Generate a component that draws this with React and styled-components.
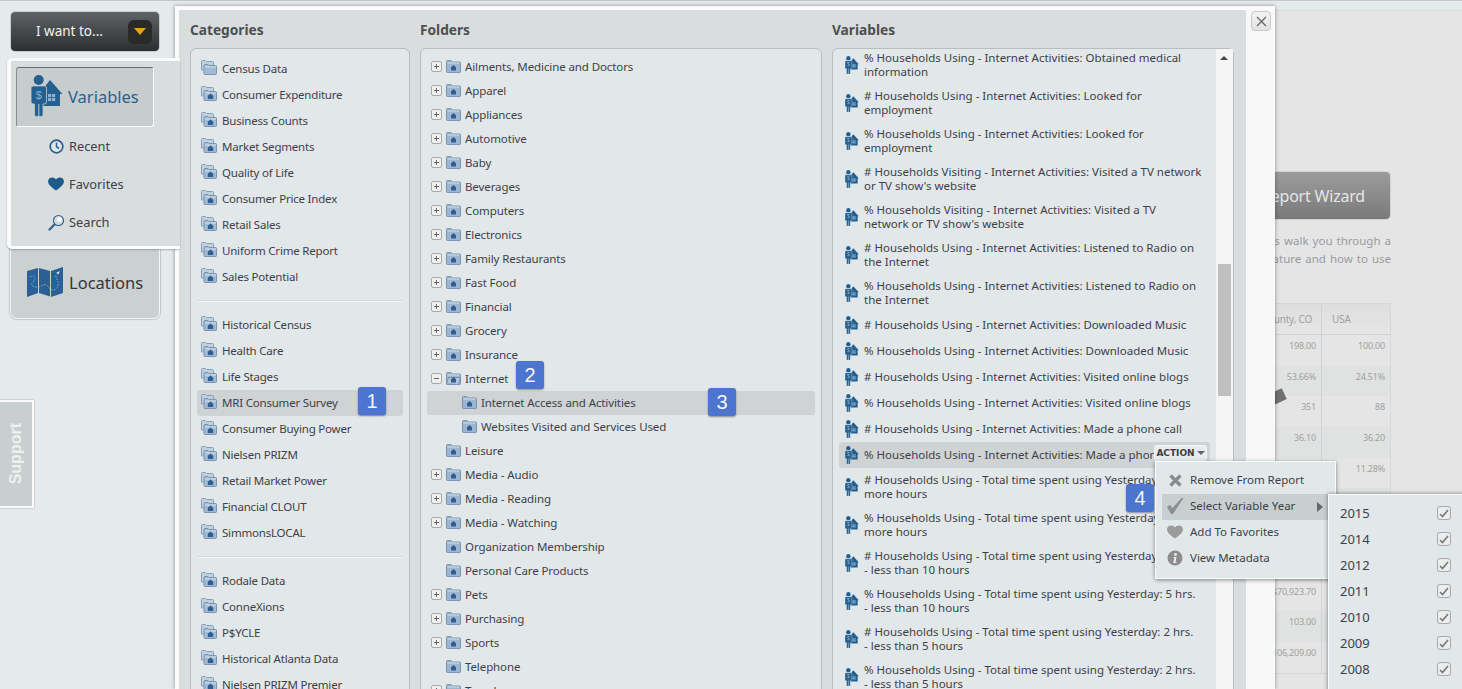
import React from "react";
import styled, { createGlobalStyle } from "styled-components";

const FONT = `"Noto Sans", "DejaVu Sans", sans-serif`;

const Global = createGlobalStyle`
  html, body { margin: 0; padding: 0; height: 689px; overflow: hidden; background: #e5eaed; }
  * { box-sizing: border-box; }
  #root { height: 689px; overflow: hidden; }
`;

const Page = styled.div`
  display: flex;
  height: 689px;
  overflow: hidden;
  border-top: 1px solid #c4c7c7;
  font-family: ${FONT};
  font-size: 11.5px;
  color: #3d4147;
`;

/* ---------- sidebar ---------- */
const Sidebar = styled.aside`
  width: 175px;
  flex: none;
  display: flex;
  flex-direction: column;
  padding-top: 10px;
  position: relative;
  z-index: 3;
`;
const WantButton = styled.div`
  width: 150px;
  height: 41px;
  margin: 0 0 6px 10px;
  display: flex;
  align-items: center;
  justify-content: space-between;
  padding: 0 7px 0 25px;
  border: 1px solid #c9cccc;
  border-radius: 5px;
  background: linear-gradient(#5e6365, #2c2f30);
  color: #f2f2f2;
  font-size: 13.5px;
`;
const WantLabel = styled.span`
  margin-top: -2px;
`;
const Caret = styled.span`
  width: 24px;
  height: 24px;
  border-radius: 6px;
  background: #2a2b29;
  display: flex;
  align-items: center;
  justify-content: center;
  &::after {
    content: "";
    border-left: 6.5px solid transparent;
    border-right: 6.5px solid transparent;
    border-top: 7px solid #e6a21a;
  }
`;
const NavPanel = styled.div`
  width: 173px;
  height: 191px;
  margin-left: 7px;
  padding: 6px 0 0 5px;
  background: #d9dddd;
  border: 4px solid #fbfbfb;
  border-width: 3px 0 3px 4px;
  border-radius: 5px 0 0 5px;
  box-shadow: 0 1px 2px rgba(0,0,0,.25);
  position: relative;
  z-index: 2;
`;
const VariablesTab = styled.div`
  width: 138px;
  height: 60px;
  display: flex;
  align-items: center;
  gap: 5px;
  padding: 0 0 2px 14px;
  background: #c7cccc;
  border: 1px solid #fff;
  border-top-color: #6b6e6e;
  border-left-color: #8a8d8d;
  border-radius: 3px;
  color: #2b6192;
  font-size: 16.5px;
`;
const SubNav = styled.div`
  display: flex;
  align-items: center;
  height: 38px;
  padding-left: 32px;
  gap: 5px;
  font-size: 12.8px;
  color: #3d4147;
`;
const SubIcon = styled.span`
  width: 16px;
  height: 16px;
  flex: none;
  display: flex;
  align-items: center;
  justify-content: center;
`;
const LocationsTab = styled.div`
  width: 150px;
  height: 70px;
  margin-left: 10px;
  display: flex;
  align-items: center;
  gap: 5px;
  padding: 0 0 2px 16px;
  background: #cbd0d0;
  border: 1px solid #f4f5f5;
  border-top: 0;
  border-radius: 0 0 7px 7px;
  box-shadow: 0 0 1px 1px #c2c6c6;
  color: #33373a;
  font-size: 16.5px;
`;
const SupportTab = styled.div`
  width: 34px;
  height: 108px;
  margin-top: 81px;
  display: flex;
  align-items: center;
  justify-content: center;
  background: #c9cfcf;
  border: 2px solid #fbfbfb;
  border-left: 0;
  box-shadow: 1px 0 0 #cfd3d3, 0 1px 0 #cfd3d3, 0 -1px 0 #cfd3d3;
  color: #eef0f0;
  font: bold 16px "Liberation Sans", sans-serif;
  & > span { writing-mode: vertical-rl; transform: rotate(180deg); }
`;

/* ---------- modal ---------- */
const Modal = styled.main`
  width: 1100px;
  flex: none;
  margin-top: 5px;
  padding-right: 29px;
  background: #f8f8f8;
  border: 4px solid #fbfbfb;
  border-width: 4px 0 0 4px;
  box-shadow: 0 0 4px rgba(0,0,0,.4);
  position: relative;
  z-index: 2;
`;
const CloseButton = styled.div`
  position: absolute;
  top: 1px;
  right: 4px;
  width: 20px;
  height: 20px;
  border: 1px solid #c9c9c9;
  border-radius: 4px;
  background: linear-gradient(#f3f3f3, #e2e2e2);
  display: flex;
  align-items: center;
  justify-content: center;
`;
const Columns = styled.div`
  display: grid;
  grid-template-columns: 220px 402px 402px;
  gap: 10px;
  padding-left: 11px;
  background: #d9dddd;
  min-height: 700px;
`;
const Column = styled.section`
  display: flex;
  flex-direction: column;
`;
const Title = styled.h2`
  margin: 0;
  height: 38px;
  line-height: 40px;
  font-size: 13.7px;
  font-weight: 700;
  color: #4b4f52;
`;
const List = styled.div`
  flex: 1;
  position: relative;
  background: #e2e7ea;
  border: 1px solid #b9bdbd;
  border-radius: 6px 6px 0 0;
  padding: ${(p) => p.$pad};
  letter-spacing: ${(p) => p.$track || 0}px;
`;
const CatRow = styled.div`
  position: relative;
  height: 26px;
  display: flex;
  align-items: center;
  gap: 4px;
  margin: 0 6px;
  padding: 0 0 2px 4px;
  border-radius: 3px;
  background: ${(p) => (p.$active ? "#cfd3d3" : "transparent")};
`;
const Divider = styled.div`
  height: 2px;
  margin: 10px 6px;
  background: #f3f5f5;
  border-top: 1px solid #d6d9d9;
`;
const FolderRow = styled.div`
  position: relative;
  height: 24px;
  display: flex;
  align-items: center;
  margin: 0 6px;
  padding: 0 0 2px ${(p) => (p.$child ? 35 : 19)}px;
  gap: 4px;
  border-radius: 3px;
  background: ${(p) => (p.$active ? "#cfd3d3" : "transparent")};
`;
const Expander = styled.span`
  position: absolute;
  left: 4px;
  top: 6px;
  width: 11px;
  height: 11px;
  border: 1px solid #a9a9a9;
  border-radius: 2px;
  background: #eef0f0;
  &::before {
    content: "";
    position: absolute;
    left: 2px;
    right: 2px;
    top: 4px;
    height: 1px;
    background: #666;
  }
  &::after {
    content: "";
    display: ${(p) => (p.$open ? "none" : "block")};
    position: absolute;
    top: 2px;
    bottom: 2px;
    left: 4px;
    width: 1px;
    background: #666;
  }
`;
const VarRows = styled.div`
  margin-top: -3px;
`;
const VarRow = styled.div`
  position: relative;
  width: 371px;
  height: ${(p) => (p.$lines === 2 ? 38 : 26)}px;
  margin-left: 6px;
  display: flex;
  align-items: center;
  gap: 5px;
  padding-left: 6px;
  border-radius: 3px;
  line-height: 14px;
  white-space: pre;
  background: ${(p) => (p.$active ? "#cfd3d3" : "transparent")};
`;
const ScrollTrack = styled.div`
  position: absolute;
  top: 0;
  right: 0;
  bottom: 0;
  width: 17px;
  background: #f5f5f5;
  &::before {
    content: "";
    position: absolute;
    left: 4px;
    top: 7px;
    border-left: 4px solid transparent;
    border-right: 4px solid transparent;
    border-bottom: 4px solid #444;
  }
`;
const ScrollThumb = styled.div`
  position: absolute;
  left: 2px;
  width: 13px;
  top: 215px;
  height: 132px;
  background: #bfbfbf;
`;
const Badge = styled.div`
  position: absolute;
  left: ${(p) => p.$x}px;
  top: ${(p) => p.$y}px;
  width: 28px;
  height: 28px;
  border-radius: 3px;
  background: #4d74cf;
  box-shadow: 0 1px 2px rgba(0,0,0,.4);
  color: #f5f7fb;
  font: 20px/28px "Liberation Sans", sans-serif;
  letter-spacing: 0;
  text-align: center;
  z-index: 6;
`;
const ActionButton = styled.div`
  position: absolute;
  right: 3px;
  top: 3px;
  width: 53px;
  height: 16px;
  display: flex;
  align-items: center;
  justify-content: center;
  gap: 2px;
  background: #e6ecef;
  border: 1px solid #f6f8f8;
  border-radius: 3px;
  font: bold 9px "DejaVu Sans", sans-serif;
  color: #3a3d40;
  &::after {
    content: "";
    border-left: 4px solid transparent;
    border-right: 4px solid transparent;
    border-top: 4px solid #666;
  }
`;
const Menu = styled.div`
  position: absolute;
  left: 316px;
  top: 19px;
  width: 181px;
  height: 118px;
  padding: 6px;
  background: #e2e7ea;
  border: 1px solid #fbfbfb;
  box-shadow: 0 1px 4px rgba(0,0,0,.45);
  z-index: 4;
`;
const MenuItem = styled.div`
  position: relative;
  height: 26px;
  display: flex;
  align-items: center;
  gap: 7px;
  padding: 0 0 2px 5px;
  background: ${(p) => (p.$active ? "#c9cfcf" : "transparent")};
`;
const MenuIcon = styled.span`
  width: 16px;
  height: 16px;
  flex: none;
  display: flex;
  align-items: center;
  justify-content: center;
`;
const MenuArrow = styled.span`
  position: absolute;
  right: 6px;
  top: 8px;
  border-top: 5px solid transparent;
  border-bottom: 5px solid transparent;
  border-left: 6px solid #666;
`;
const SubMenu = styled.div`
  position: absolute;
  left: 166px;
  top: 0;
  width: 140px;
  height: 210px;
  padding-top: 5px;
  background: #e2e7ea;
  border: 1px solid #fbfbfb;
  box-shadow: 0 0 4px rgba(0,0,0,.5);
  z-index: 5;
`;
const YearRow = styled.div`
  height: 26px;
  display: flex;
  align-items: center;
  justify-content: space-between;
  padding: 0 16px 0 11px;
  font-size: 13px;
`;
const CheckBox = styled.span`
  width: 14px;
  height: 14px;
  border: 1px solid #a8a8a8;
  border-radius: 3px;
  background: #eceeee;
  display: flex;
  align-items: center;
  justify-content: center;
`;

/* ---------- page behind the modal ---------- */
const Backdrop = styled.div`
  flex: 1;
  min-width: 0;
  margin-top: 9px;
  padding: 160px 71px 0 0;
  background: #e5e5e5;
  border-top: 1px solid #d9dcdc;
  overflow: hidden;
  display: flex;
  flex-direction: column;
  align-items: flex-end;
`;
const WizardButton = styled.div`
  flex: none;
  width: 300px;
  height: 49px;
  padding-right: 25px;
  text-align: right;
  line-height: 48px;
  background: linear-gradient(#9c9c9c, #7a7a7a);
  border: 1px solid #d2d2d2;
  border-radius: 5px;
  color: #e4e6e6;
  font-size: 16px;
  letter-spacing: -0.2px;
`;
const Blurb = styled.p`
  flex: none;
  margin: 12px 0 35px;
  line-height: 18px;
  font-size: 11.5px;
  color: #9a9a9e;
  white-space: pre;
  text-align: right;
  word-spacing: 1px;
`;
const DataTable = styled.div`
  flex: none;
  position: relative;
  width: 300px;
  border: 1px solid #d8d8d8;
  color: #a0a0a0;
`;
const TableRow = styled.div`
  display: grid;
  grid-template-columns: 1fr 69px;
  height: ${(p) => (p.$head ? 31 : 30.7)}px;
  background: ${(p) => (p.$head ? "linear-gradient(#dedede, #e6e6e6)" : p.$odd ? "#e0e2e1" : "#e5e5e5")};
  border-bottom: ${(p) => (p.$head ? "1px solid #d2d2d2" : "0")};
`;
const Cell = styled.div`
  padding: 4px 5px 0 0;
  text-align: right;
  font-size: 9px;
  letter-spacing: -0.2px;
  border-left: ${(p) => (p.$last ? "1px solid #d2d2d2" : "0")};
`;
const HeadCell = styled.div`
  padding: ${(p) => (p.$last ? "8px 0 0 10px" : "8px 9px 0 0")};
  text-align: ${(p) => (p.$last ? "left" : "right")};
  font-size: 10px;
  letter-spacing: -0.2px;
  border-left: ${(p) => (p.$last ? "1px solid #d2d2d2" : "0")};
`;
const Pointer = styled.div`
  position: absolute;
  left: 177px;
  top: 87px;
  width: 16px;
  height: 12px;
  background: #707070;
  transform: rotate(-25deg);
`;

/* ---------- icons ---------- */
const FolderIcon = ({ open }) => (
  <svg width="15" height="13" viewBox="0 0 15 13" style={{ flex: "none" }}>
    <path d="M.5 12V1.500q0-1 1-1h3.500l1.500 1.500h7q1 0 1 1V12q0 .5-1 .5h-12q-1 0-1-.5z" fill="#9db5cf" stroke="#7a94b1" />
    <path d="M1.500 3h12" stroke="#d3deea" />
    {open ? <path d="M.5 12l2-6.500h12l-2 7z" fill="#b1c5d9" stroke="#7a94b1" /> : null}
    <path d="M7.500 5l2.500 2.200V10.500H5V7.200z" fill="#2f5f90" />
  </svg>
);
const CategoryIcon = ({ plain }) => (
  <svg width="17" height="16" viewBox="0 0 17 16" style={{ flex: "none" }}>
    <path d="M.5 10V1.500q0-1 1-1h3l1 1h6q1 0 1 1V10z" fill="#c0d0e0" stroke="#86a0ba" />
    <path d="M3 13V5.500q0-1 1-1h3l1 1h6.500q1 0 1 1v7q0 1-1 1H4q-1 0-1-1z" fill="#a3bad3" stroke="#7a94b1" />
    <path d="M4 7h11" stroke="#d3deea" />
    {plain ? null : <path d="M9.500 7.500l2.700 2.300V13H6.800V9.800z" fill="#2f5f90" />}
  </svg>
);
const PersonHouse = ({ size = 32, knock = "#c7cccc", color = "#24608f" }) => (
  <svg width={size} height={size * 1.31} viewBox="0 0 32 42" style={{ flex: "none" }}>
    <path d="M19 5L31.500 19H29V31H12V19H8z" fill={color} />
    <g fill="#8fb0cc">
      <rect x="17" y="19" width="3.200" height="3.200" />
      <rect x="21" y="19" width="3.200" height="3.200" />
      <rect x="17" y="23" width="3.200" height="3.200" />
      <rect x="21" y="23" width="3.200" height="3.200" />
    </g>
    <circle cx="7.700" cy="5" r="5" fill={color} />
    <path d="M2 11h11.500q2 0 2 2v14q0 2-2 2H12v11q0 1.500-1.500 1.500H5q-1.500 0-1.500-1.500V29H2q-2 0-2-2V13q0-2 2-2z" fill={color} stroke={knock} strokeWidth=".8" />
    <path d="M7.800 29v13" stroke={knock} strokeWidth="1" />
    <text x="7.700" y="24" textAnchor="middle" fontSize="11" fontFamily="Liberation Sans" fill="#8fb0cc">$</text>
  </svg>
);
const MapIcon = () => (
  <svg width="37" height="31" viewBox="0 0 37 31" style={{ flex: "none" }}>
    <path d="M0 4l11-3v25L0 30z" fill="#2a6096" />
    <path d="M12 1l11 3v25.500L12 26z" fill="#2a6096" />
    <path d="M24 4l12-4v26l-12 4z" fill="#2a6096" />
    <path d="M3 10c4-3 7 1 3 5s3 7 8 4 6-1 8 2 8 3 9-3-3-6-2-10" fill="none" stroke="#a9c2d8" strokeWidth=".8" strokeDasharray="1.500 1.500" />
    <path d="M29 6l4-2-2 4-.5-1.500z" fill="#e3edf4" />
  </svg>
);
const ClockIcon = () => (
  <svg width="15" height="15" viewBox="0 0 15 15">
    <circle cx="7.500" cy="7.500" r="6.300" fill="#e2e7ea" stroke="#2c5f8f" strokeWidth="1.700" />
    <path d="M7.500 3.500v4.300l2.700 1.700" fill="none" stroke="#2c5f8f" strokeWidth="1.500" />
  </svg>
);
const HeartIcon = ({ color = "#1f5a8c", w = 16, h = 14 }) => (
  <svg width={w} height={h} viewBox="0 0 17 15" style={{ flex: "none" }}>
    <path d="M8.500 14.500C3 10.500 0 8 0 4.500 0 2 2 .5 4.300.5c2 0 3.400 1 4.200 2.300C9.300 1.500 10.700.5 12.700.5 15 .5 17 2 17 4.500c0 3.500-3 6-8.500 10z" fill={color} />
  </svg>
);
const SearchIcon = () => (
  <svg width="17" height="17" viewBox="0 0 17 17" style={{ flex: "none" }}>
    <path d="M1.500 15.500l5-5" stroke="#2c5f8f" strokeWidth="2.200" strokeLinecap="round" />
    <circle cx="10.500" cy="6.500" r="5" fill="#d5d8da" stroke="#2c5f8f" strokeWidth="1.100" />
    <circle cx="11.500" cy="5.500" r="2.600" fill="#f4f5f6" />
  </svg>
);
const CloseIcon = () => (
  <svg width="11" height="11" viewBox="0 0 11 11">
    <path d="M1 1l9 9M10 1l-9 9" stroke="#666" strokeWidth="1.300" />
  </svg>
);
const GreyX = () => (
  <svg width="13" height="13" viewBox="0 0 13 13">
    <path d="M1.500 1.500l10 10M11.500 1.500l-10 10" stroke="#8b8b8b" strokeWidth="3.200" />
  </svg>
);
const GreyCheck = () => (
  <svg width="17" height="16" viewBox="0 0 17 16" style={{ flex: "none" }}>
    <path d="M0 9l3-2 2.500 3L14.500 0h2L6 16H4z" fill="#8f8f8f" />
  </svg>
);
const InfoIcon = () => (
  <svg width="16" height="16" viewBox="0 0 16 16">
    <circle cx="8" cy="8" r="7.500" fill="#8c8c8c" />
    <circle cx="8.500" cy="4.500" r="1.400" fill="#eee" />
    <path d="M6.500 7h3l-1 5h1v1h-3.200l1-5h-.8z" fill="#eee" />
  </svg>
);
const TinyCheck = () => (
  <svg width="10" height="9" viewBox="0 0 10 9">
    <path d="M1 5l2.500 2.500L9 1" fill="none" stroke="#777" strokeWidth="1.600" />
  </svg>
);

/* ---------- data ---------- */
const catGroups = [
  ["Census Data", "Consumer Expenditure", "Business Counts", "Market Segments", "Quality of Life", "Consumer Price Index", "Retail Sales", "Uniform Crime Report", "Sales Potential"],
  ["Historical Census", "Health Care", "Life Stages", "MRI Consumer Survey", "Consumer Buying Power", "Nielsen PRIZM", "Retail Market Power", "Financial CLOUT", "SimmonsLOCAL"],
  ["Rodale Data", "ConneXions", "P$YCLE", "Historical Atlanta Data", "Nielsen PRIZM Premier"],
];
const folders = [
  ["Ailments, Medicine and Doctors", "+"], ["Apparel", "+"], ["Appliances", "+"], ["Automotive", "+"], ["Baby", "+"],
  ["Beverages", "+"], ["Computers", "+"], ["Electronics", "+"], ["Family Restaurants", "+"], ["Fast Food", "+"],
  ["Financial", "+"], ["Grocery", "+"], ["Insurance", "+"], ["Internet", "-"],
  ["Internet Access and Activities", "c"], ["Websites Visited and Services Used", "c"],
  ["Leisure", ""], ["Media - Audio", "+"], ["Media - Reading", "+"], ["Media - Watching", "+"],
  ["Organization Membership", ""], ["Personal Care Products", ""], ["Pets", "+"], ["Purchasing", "+"], ["Sports", "+"],
  ["Telephone", ""], ["Travel", "+"],
];
const IA = "Households Using - Internet Activities:";
const TT = "Households Using - Total time spent using Yesterday:";
const variables = [
  `% ${IA} Obtained medical\ninformation`,
  `# ${IA} Looked for\nemployment`,
  `% ${IA} Looked for\nemployment`,
  `# Households Visiting - Internet Activities: Visited a TV network\nor TV show's website`,
  `% Households Visiting - Internet Activities: Visited a TV\nnetwork or TV show's website`,
  `# ${IA} Listened to Radio on\nthe Internet`,
  `% ${IA} Listened to Radio on\nthe Internet`,
  `# ${IA} Downloaded Music`,
  `% ${IA} Downloaded Music`,
  `# ${IA} Visited online blogs`,
  `% ${IA} Visited online blogs`,
  `# ${IA} Made a phone call`,
  `% ${IA} Made a phone call`,
  `# ${TT} 10 or\nmore hours`,
  `% ${TT} 10 or\nmore hours`,
  `# ${TT} 5 hrs.\n- less than 10 hours`,
  `% ${TT} 5 hrs.\n- less than 10 hours`,
  `# ${TT} 2 hrs.\n- less than 5 hours`,
  `% ${TT} 2 hrs.\n- less than 5 hours`,
];
const years = ["2015", "2014", "2012", "2011", "2010", "2009", "2008"];
const tableRows = [
  ["198.00", "100.00"], ["53.66%", "24.51%"], ["351", "88"], ["36.10", "36.20"], ["", "11.28%"],
  ["", ""], ["", ""], ["", ""], ["$70,923.70", ""], ["103.00", ""], ["106,209.00", ""],
];

const ActionMenu = () => (
  <>
    <ActionButton>ACTION</ActionButton>
    <Badge $x={287} $y={42}>4</Badge>
    <Menu>
      <MenuItem><MenuIcon><GreyX /></MenuIcon>Remove From Report</MenuItem>
      <MenuItem $active>
        <MenuIcon><GreyCheck /></MenuIcon>Select Variable Year<MenuArrow />
        <SubMenu>
          {years.map((y) => (
            <YearRow key={y}>{y}<CheckBox><TinyCheck /></CheckBox></YearRow>
          ))}
        </SubMenu>
      </MenuItem>
      <MenuItem><MenuIcon><HeartIcon color="#9b9b9b" /></MenuIcon>Add To Favorites</MenuItem>
      <MenuItem><MenuIcon><InfoIcon /></MenuIcon>View Metadata</MenuItem>
    </Menu>
  </>
);

export default function App() {
  return (
    <Page>
      <Global />
      <Sidebar>
        <WantButton><WantLabel>I want to...</WantLabel><Caret /></WantButton>
        <NavPanel>
          <VariablesTab><PersonHouse />Variables</VariablesTab>
          <SubNav><SubIcon><ClockIcon /></SubIcon>Recent</SubNav>
          <SubNav><SubIcon><HeartIcon /></SubIcon>Favorites</SubNav>
          <SubNav><SubIcon><SearchIcon /></SubIcon>Search</SubNav>
        </NavPanel>
        <LocationsTab><MapIcon />Locations</LocationsTab>
        <SupportTab><span>Support</span></SupportTab>
      </Sidebar>

      <Modal>
        <CloseButton><CloseIcon /></CloseButton>
        <Columns>
          <Column>
            <Title>Categories</Title>
            <List $pad="7px 0 0" $track={-0.2}>
              {catGroups.map((group, g) => (
                <React.Fragment key={g}>
                  {g > 0 ? <Divider /> : null}
                  {group.map((name) => (
                    <CatRow key={name} $active={name === "MRI Consumer Survey"}>
                      <CategoryIcon plain={name === "Census Data"} />
                      {name}
                      {name === "MRI Consumer Survey" ? <Badge $x={161} $y={-3}>1</Badge> : null}
                    </CatRow>
                  ))}
                </React.Fragment>
              ))}
            </List>
          </Column>
          <Column>
            <Title>Folders</Title>
            <List $pad="6px 0 0" $track={-0.1}>
              {folders.map(([name, kind]) => (
                <FolderRow key={name} $child={kind === "c"} $active={name === "Internet Access and Activities"}>
                  {kind === "+" || kind === "-" ? <Expander $open={kind === "-"} /> : null}
                  <FolderIcon open={kind === "-"} />
                  {name}
                  {name === "Internet" ? <Badge $x={89} $y={-6}>2</Badge> : null}
                  {name === "Internet Access and Activities" ? <Badge $x={281} $y={-3}>3</Badge> : null}
                </FolderRow>
              ))}
            </List>
          </Column>
          <Column>
            <Title>Variables</Title>
            <List $pad="0">
              <ScrollTrack><ScrollThumb /></ScrollTrack>
              <VarRows>
                {variables.map((text, i) => (
                  <VarRow key={i} $lines={text.includes("\n") ? 2 : 1} $active={i === 12}>
                    <PersonHouse size={14} knock="#e2e7ea" color="#24608f" />
                    <span>{text}</span>
                    {i === 12 ? <ActionMenu /> : null}
                  </VarRow>
                ))}
              </VarRows>
            </List>
          </Column>
        </Columns>
      </Modal>

      <Backdrop>
        <WizardButton>Report Wizard</WizardButton>
        <Blurb>{"Let's walk you through a\nfeature and how to use"}</Blurb>
        <DataTable>
          <Pointer />
          <TableRow $head>
            <HeadCell>County, CO</HeadCell>
            <HeadCell $last>USA</HeadCell>
          </TableRow>
          {tableRows.map(([a, b], i) => (
            <TableRow key={i} $odd={i % 2 === 1}>
              <Cell>{a}</Cell>
              <Cell $last>{b}</Cell>
            </TableRow>
          ))}
        </DataTable>
      </Backdrop>
    </Page>
  );
}
